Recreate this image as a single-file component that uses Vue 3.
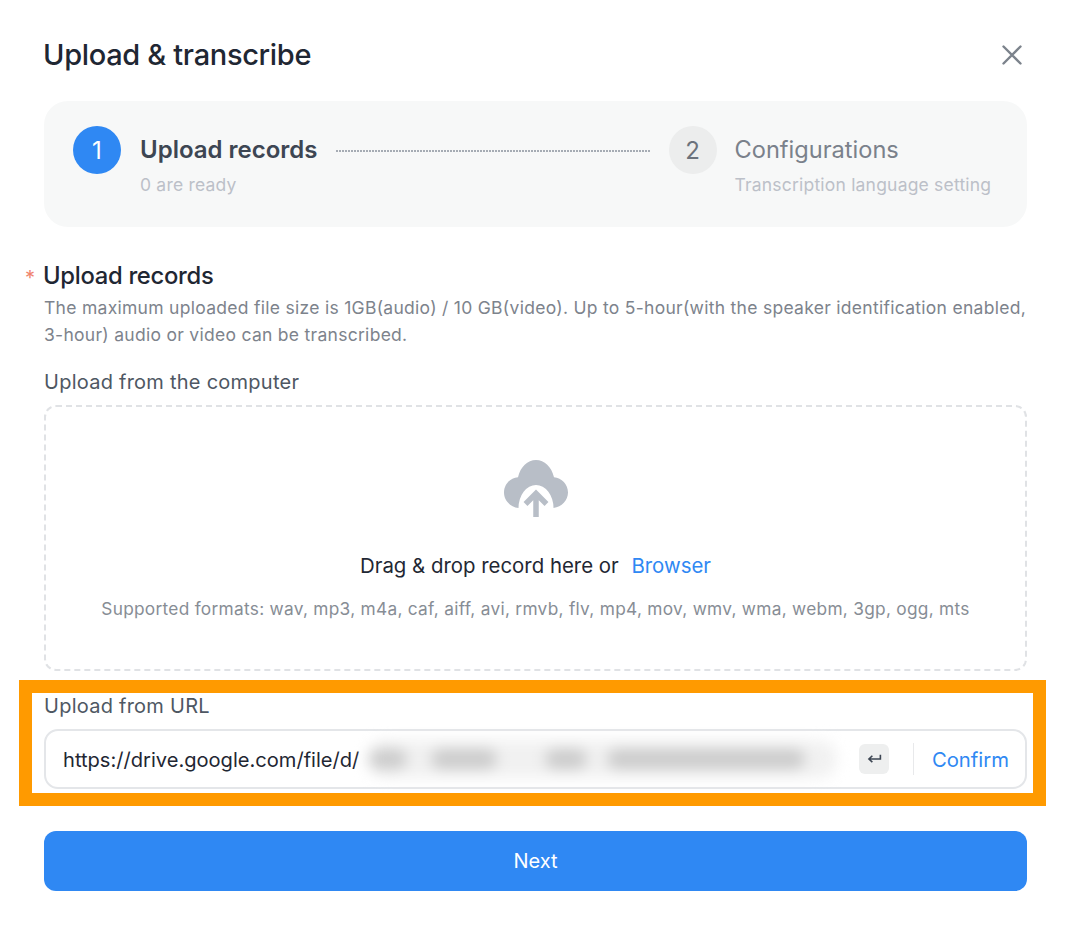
<script setup>
const steps = [
  { n: 1, title: 'Upload records', sub: '0 are ready', active: true },
  { n: 2, title: 'Configurations', sub: 'Transcription language setting', active: false }
]
const blurs = [
  { w: 38, gap: 24 }, { w: 66, gap: 48 }, { w: 42, gap: 20 }, { w: 198, gap: 0 }
]
</script>

<template>
  <main class="dialog">
    <header class="head">
      <h1>Upload &amp; transcribe</h1>
      <svg class="close" viewBox="0 0 20 20" aria-label="Close">
        <path d="M1.5 1.5 18.5 18.5M18.5 1.5 1.5 18.5" />
      </svg>
    </header>

    <section class="stepper">
      <div class="step first">
        <span class="num on">1</span>
        <div class="step-text">
          <div class="step-title strong">{{ steps[0].title }}</div>
          <div class="step-sub">{{ steps[0].sub }}</div>
        </div>
      </div>
      <div class="dash"></div>
      <div class="step second">
        <span class="num">2</span>
        <div class="step-text">
          <div class="step-title">{{ steps[1].title }}</div>
          <div class="step-sub">{{ steps[1].sub }}</div>
        </div>
      </div>
    </section>

    <section class="intro">
      <h2><span class="star">*</span>Upload records</h2>
      <p>The maximum uploaded file size is 1GB(audio) / 10 GB(video). Up to 5-hour(with the speaker identification enabled, 3-hour) audio or video can be transcribed.</p>
    </section>

    <div class="label computer">Upload from the computer</div>
    <section class="drop">
      <svg class="cloud" viewBox="0 0 64 58">
        <path class="cloud-fill" d="M14.5 49C6.2 48 0 41.3 0 33.500C0 25.300 6.300 18.700 14 18.200C16.500 7.700 23.500 1 32 1C40.500 1 47.500 7.700 50 18.200C57.700 18.700 64 25.300 64 33.500C64 41.300 57.800 48 49.500 49A17.500 23 0 0 0 14.500 49Z" />
        <path class="cloud-arrow" d="M32 58V35M21.500 45 32 34.500 42.500 45" />
      </svg>
      <div class="drag">Drag &amp; drop record here or <a>Browser</a></div>
      <div class="formats">Supported formats: wav, mp3, m4a, caf, aiff, avi, rmvb, flv, mp4, mov, wmv, wma, webm, 3gp, ogg, mts</div>
    </section>

    <section class="url">
      <div class="highlight"></div>
      <div class="label">Upload from URL</div>
      <div class="field">
        <span class="value">https://drive.google.com/file/d/</span>
        <span class="smear">
          <i v-for="(b, i) in blurs" :key="i" :style="{ width: b.w + 'px', marginRight: b.gap + 'px' }"></i>
        </span>
        <span class="enter">
          <svg viewBox="0 0 14 12"><path d="M12.500 1.500V5.500H2M5 2.500 1.800 5.500 5 8.500" /></svg>
        </span>
        <span class="sep"></span>
        <a class="confirm">Confirm</a>
      </div>
    </section>

    <button class="next">Next</button>
  </main>
</template>

<style scoped>
.dialog {
  width: 1068px;
  height: 932px;
  box-sizing: border-box;
  padding: 36px 41px 0 44px;
  background: #fff;
  font-family: Inter, "Liberation Sans", sans-serif;
  color: #1f2733;
  overflow: hidden;
}
.head {
  display: flex;
  justify-content: space-between;
  align-items: center;
  height: 38px;
  padding-right: 5px;
}
h1 {
  margin: 0;
  margin-left: -1px;
  font-size: 29px;
  line-height: 38px;
  font-weight: 500;
  letter-spacing: -0.33px;
}
.close {
  width: 20px;
  height: 20px;
  fill: none;
  stroke: #7c838c;
  stroke-width: 2.400;
  stroke-linecap: round;
}
.stepper {
  margin-top: 27px;
  height: 126px;
  box-sizing: border-box;
  padding: 25px 35px 0 29px;
  display: flex;
  align-items: flex-start;
  background: #f7f8f8;
  border-radius: 24px;
}
.step {
  display: flex;
  gap: 19px;
}
.step.second {
  gap: 18px;
}
.num {
  width: 48px;
  height: 48px;
  flex: none;
  border-radius: 50%;
  display: flex;
  align-items: center;
  justify-content: center;
  background: #eceded;
  color: #6b727c;
  font-size: 24px;
}
.num.on {
  background: #2f88f3;
  color: #fff;
}
.step-title {
  font-size: 23.600px;
  line-height: 48px;
  color: #7a818b;
  font-weight: 400;
  white-space: nowrap;
  letter-spacing: 0;
}
.step-title.strong {
  font-size: 24px;
  font-weight: 600;
  color: #3d4653;
  letter-spacing: 0;
}
.step-sub {
  margin-top: -1px;
  font-size: 17.500px;
  line-height: 24px;
  color: #bcc0c8;
  letter-spacing: 0.2px;
  white-space: nowrap;
}
.dash {
  width: 315px;
  height: 2px;
  margin: 24px 18px 0;
  flex: none;
  background: repeating-linear-gradient(90deg, #a6acb4 0 2px, transparent 2px 3px);
}
.intro {
  margin-top: 33px;
}
h2 {
  position: relative;
  margin: 0;
  margin-left: -1px;
  font-size: 23.800px;
  line-height: 32px;
  font-weight: 500;
  letter-spacing: -0.3px;
}
.star {
  position: absolute;
  left: -18px;
  top: 2px;
  font-size: 20px;
  font-weight: 400;
  color: #f0846f;
}
.intro p {
  margin: 2px 0 0;
  width: 990px;
  font-size: 17.500px;
  line-height: 27px;
  color: #7d838c;
  letter-spacing: 0.285px;
}
.label {
  font-size: 20px;
  line-height: 28px;
  color: #4e5763;
  letter-spacing: 0.25px;
}
.computer {
  margin-top: 20px;
}
.drop {
  margin-top: 9px;
  height: 266px;
  box-sizing: border-box;
  padding-top: 52px;
  display: flex;
  flex-direction: column;
  align-items: center;
  border: 2px dashed #e0e2e5;
  border-radius: 12px;
}
.cloud {
  width: 64px;
  height: 58px;
  flex: none;
}
.cloud-fill {
  fill: #b8bec7;
}
.cloud-arrow {
  fill: none;
  stroke: #b8bec7;
  stroke-width: 5.500;
}
.drag {
  margin-top: 35px;
  font-size: 20.400px;
  line-height: 28px;
  color: #1f2733;
  white-space: pre-wrap;
}
.drag a {
  margin-left: 7px;
  color: #2f88f3;
}
.formats {
  margin-top: 17px;
  font-size: 17.300px;
  line-height: 24px;
  color: #878d95;
  letter-spacing: 0.28px;
}
.url {
  position: relative;
  margin-top: 21px;
}
.highlight {
  position: absolute;
  left: -25px;
  right: -19px;
  top: -12px;
  height: 126px;
  box-sizing: border-box;
  border: 13px solid #ff9a00;
  pointer-events: none;
}
.field {
  margin-top: 9px;
  height: 60px;
  box-sizing: border-box;
  padding: 0 16px 0 17px;
  display: flex;
  align-items: center;
  border: 2px solid #e4e6e9;
  border-radius: 14px;
}
.value {
  padding-top: 1px;
  font-size: 20.100px;
  color: #1f2733;
  white-space: nowrap;
}
.smear {
  width: 470px;
  height: 38px;
  margin-left: 8px;
  flex: none;
  display: flex;
  align-items: center;
  padding-left: 2px;
  box-sizing: border-box;
  background: #f1f1f1;
  border-radius: 19px;
  filter: blur(7px);
}
.smear i {
  display: block;
  height: 20px;
  border-radius: 10px;
  background: #cccccc;
}
.enter {
  margin-left: 22px;
  width: 30px;
  height: 30px;
  flex: none;
  display: flex;
  align-items: center;
  justify-content: center;
  background: #eeefef;
  border-radius: 6px;
}
.enter svg {
  width: 15px;
  height: 13px;
  fill: none;
  stroke: #3d4653;
  stroke-width: 1.500;
}
.sep {
  width: 1px;
  height: 32px;
  margin-left: 24px;
  flex: none;
  background: #e8e9eb;
}
.confirm {
  margin-left: auto;
  font-size: 20.300px;
  color: #2f88f3;
}
.next {
  display: block;
  width: 100%;
  height: 60px;
  margin-top: 42px;
  border: 0;
  border-radius: 12px;
  background: #2f88f3;
  color: #fff;
  font: 400 20px Inter, "Liberation Sans", sans-serif;
}
</style>
